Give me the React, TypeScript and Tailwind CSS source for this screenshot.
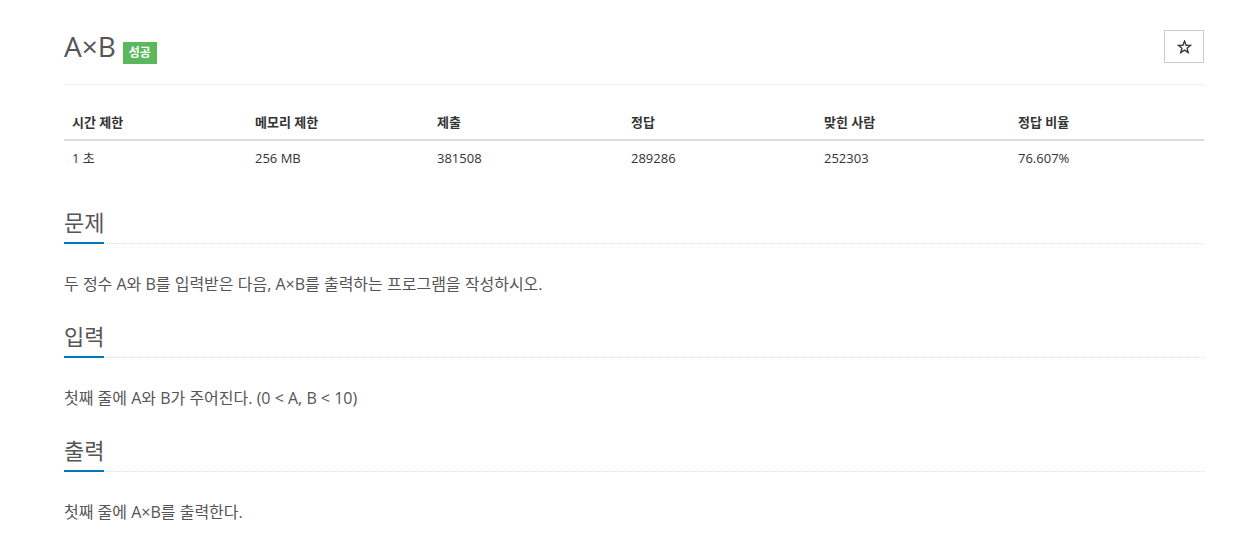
import React from "react";

const font = { fontFamily: "'Open Sans', 'Noto Sans CJK KR', sans-serif" };

function Section({ title, first, children }: { title: string; first?: boolean; children: React.ReactNode }) {
  return (
    <div>
      <div className={`border-b border-dotted border-[#dddddd] mb-[29px] ${first ? "mt-[32px]" : "mt-[26px]"}`}>
        <h2 className="inline-block text-[22px] leading-[30px] pb-[5px] mb-[-1px] border-b-2 border-[#0076c0] text-[#555] font-normal">
          {title}
        </h2>
      </div>
      <p className="text-[16px] leading-[22px] text-[#555]">{children}</p>
    </div>
  );
}

export default function App() {
  const heads = ["시간 제한", "메모리 제한", "제출", "정답", "맞힌 사람", "정답 비율"];
  const vals = ["1 초", "256 MB", "381508", "289286", "252303", "76.607%"];
  const widths = [183, 182, 194, 193, 194, 194];
  return (
    <div className="bg-white min-h-[543px] w-[1258px]" style={font}>
      <div className="ml-[64px] w-[1140px] pt-[30px]">
        <div className="flex items-start justify-between h-[34px]">
          <div className="flex items-start">
            <h1 className="text-[28px] leading-[33px] text-[#555] font-normal">A×B</h1>
            <span className="ml-[7px] mt-[12px] h-[22px] px-[6px] bg-[#5cb85c] text-white text-[12px] font-bold flex items-center">
              성공
            </span>
          </div>
          <button className="w-[40px] h-[33px] border border-[#cccccc] bg-white flex items-center justify-center">
            <svg width="15" height="14" viewBox="0 0 24 23" fill="none" stroke="#333" strokeWidth="2.2" strokeLinejoin="miter">
              <path d="M12 1.8 L14.6 8.6 L21.8 8.9 L16.2 13.5 L18.1 20.6 L12 16.6 L5.9 20.6 L7.8 13.5 L2.2 8.9 L9.4 8.6 Z" />
            </svg>
          </button>
        </div>
        <div className="mt-[20px] border-t border-[#eeeeee]" />
        <table className="mt-[20px] w-[1140px] table-fixed border-collapse text-[13px]">
          <colgroup>
            {widths.map((w, i) => (
              <col key={i} style={{ width: w }} />
            ))}
          </colgroup>
          <thead>
            <tr className="border-b-2 border-[#dddddd]">
              {heads.map((h) => (
                <th key={h} className="text-left font-bold text-[#333] px-[8px] py-[8px] leading-[18px]">
                  {h}
                </th>
              ))}
            </tr>
          </thead>
          <tbody>
            <tr>
              {vals.map((v) => (
                <td key={v} className="text-left text-[#333] px-[8px] py-[8px] leading-[18px]">
                  {v}
                </td>
              ))}
            </tr>
          </tbody>
        </table>
        <Section title="문제" first>두 정수 A와 B를 입력받은 다음, A×B를 출력하는 프로그램을 작성하시오.</Section>
        <Section title="입력">첫째 줄에 A와 B가 주어진다. (0 &lt; A, B &lt; 10)</Section>
        <Section title="출력">첫째 줄에 A×B를 출력한다.</Section>
      </div>
    </div>
  );
}
